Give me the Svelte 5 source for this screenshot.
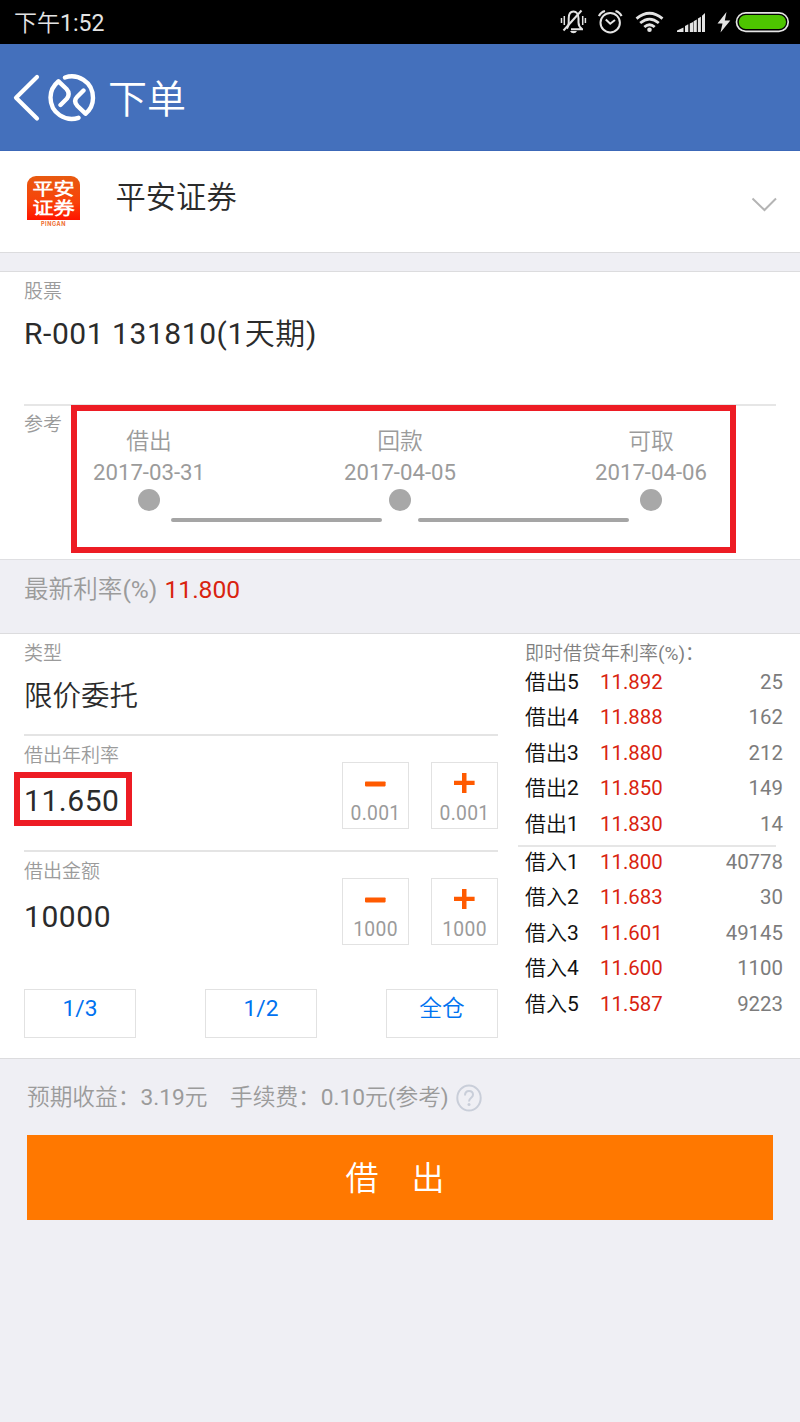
<script>
  const timeline = [
    { label: '借出', date: '2017-03-31' },
    { label: '回款', date: '2017-04-05' },
    { label: '可取', date: '2017-04-06' }
  ];
  const fields = [
    { label: '借出年利率', value: '11.650', step: '0.001', marked: true },
    { label: '借出金额', value: '10000', step: '1000', marked: false }
  ];
  const shares = ['1/3', '1/2', '全仓'];
  const lend = [
    ['借出5', '11.892', '25'],
    ['借出4', '11.888', '162'],
    ['借出3', '11.880', '212'],
    ['借出2', '11.850', '149'],
    ['借出1', '11.830', '14']
  ];
  const borrow = [
    ['借入1', '11.800', '40778'],
    ['借入2', '11.683', '30'],
    ['借入3', '11.601', '49145'],
    ['借入4', '11.600', '1100'],
    ['借入5', '11.587', '9223']
  ];
</script>

{#snippet quote(row)}
  <div class="quote">
    <span class="name">{row[0]}</span>
    <span class="rate">{row[1]}</span>
    <span class="volume">{row[2]}</span>
  </div>
{/snippet}

<div class="screen">
  <div class="status">
    <span class="clock">下午1:52</span>
    <svg class="bell" width="28" height="26" viewBox="560 9 28 26" fill="none" stroke="#e4e4e4" stroke-width="2">
      <path d="M567 28.500q1.700-2 1.700-6v-4c0-4.500 2-7 4.800-7s5 2.500 5 7v4q0 4 3.500 6.500v.3h-11" />
      <path d="M563.500 30.500L581.500 10.500" stroke-width="2" />
      <path d="M570 31h7q-1 2.300-3.500 2.300t-3.500-2.300z" fill="#e4e4e4" stroke="none" />
      <path d="M561.500 18v5M564.300 16v9M582.700 16v9M585.400 18v5" stroke-width="1.500" />
    </svg>
    <svg class="alarm" width="26" height="26" viewBox="597 9 26 26" fill="none" stroke="#e4e4e4">
      <circle cx="610.200" cy="22.700" r="9.700" stroke-width="2" />
      <path d="M605.800 19.500l4.400 4.200 4.800-3.700" stroke-width="2" />
      <path d="M599 16.200q1.500-4 6-5.200M621.500 16.200q-1.500-4-6-5.200" stroke-width="2.200" />
    </svg>
    <svg class="wifi" width="30" height="26" viewBox="635 9 30 26" fill="none" stroke="#e4e4e4" stroke-width="2.800">
      <path d="M636.500 18.700q13-10.800 26 0M640.200 23q9.300-7.800 18.600 0M644.300 27q5.200-4.500 10.400 0" />
      <circle cx="649.500" cy="29.800" r="2.300" fill="#e4e4e4" stroke="none" />
    </svg>
    <svg class="signal" width="29" height="26" viewBox="677 9 29 26" fill="#e4e4e4">
      <path d="M677 32v-1.500l6.500-3V32zM685 32v-6l3.300-1.800V32zM689.800 32v-8.500l3.300-1.600V32zM693.600 32V21.300l3.200-1.700V32zM697.900 32V18.600l3-1.800V32zM702 32V15.700l3-2.700v19z" />
    </svg>
    <svg class="bolt" width="14" height="26" viewBox="717 9 14 26" fill="#e4e4e4">
      <path d="M726.500 12L717.500 23.500h5L720.500 32.500 730.300 20.500h-5.500z" />
    </svg>
    <svg class="battery" width="56" height="26" viewBox="735 9 56 26">
      <rect x="736.500" y="12.800" width="51.700" height="18.500" rx="9.250" fill="none" stroke="#e4e4e4" stroke-width="1.700" />
      <rect x="738.800" y="15" width="47.200" height="14" rx="7" fill="#4dc500" />
    </svg>
  </div>

  <header>
    <svg class="back" width="28" height="50" viewBox="12 73 28 50" fill="none" stroke="#fff" stroke-width="4.200" stroke-linecap="round" stroke-linejoin="round">
      <path d="M37 77L16 97.700l21 20.800" />
    </svg>
    <svg class="brand" width="50" height="50" viewBox="47 73 50 50" fill="none" stroke="#fff" stroke-width="4.400" stroke-linecap="round" stroke-linejoin="round">
      <path d="M65 77.500C77 73.500 93 81 93 98c0 7-3 12-7.500 15.700L77.500 106Q73 101 77 97L83.500 90.500" />
      <path d="M78.500 117.800C66 122 50.500 113.500 50.500 97.500c0-7 3-12 8-16.200L66.500 89Q70.500 93.500 67 98.500L60.500 105" />
    </svg>
    <h1>下单</h1>
  </header>

  <section class="broker">
    <div class="logo">
      <div class="tile"><span>平安</span><span>证券</span></div>
      <small>PINGAN</small>
    </div>
    <span class="broker-name">平安证券</span>
    <svg width="26" height="16" viewBox="0 0 26 16" fill="none" stroke="#b4b4b4" stroke-width="2">
      <path d="M1.500 1.500l12 11.500L25 1.500" />
    </svg>
  </section>

  <section class="stock">
    <div class="label">股票</div>
    <div class="stock-name">R-001 131810(1天期)</div>
    <div class="reference">
      <div class="label">参考</div>
      <div class="timeline">
        {#each timeline as point, i}
          {#if i > 0}<i class="bar"></i>{/if}
          <div class="point">
            <span>{point.label}</span>
            <span>{point.date}</span>
            <i class="dot"></i>
          </div>
        {/each}
        <div class="mark"></div>
      </div>
    </div>
  </section>

  <div class="latest">最新利率(%) <b>11.800</b></div>

  <section class="order">
    <div class="form">
      <div class="kind">
        <div class="label">类型</div>
        <div class="kind-name">限价委托</div>
      </div>
      {#each fields as field}
        <div class="field">
          <div class="entry">
            <div class="label">{field.label}</div>
            <div class="value">
              {field.value}
              {#if field.marked}<div class="mark"></div>{/if}
            </div>
          </div>
          <button class="step">
            <svg width="22" height="22" viewBox="0 0 22 22" fill="#ff5a00"><rect x="0" y="10.500" width="20.600" height="4.900" rx=".8" /></svg>
            <span>{field.step}</span>
          </button>
          <button class="step">
            <svg width="22" height="22" viewBox="0 0 22 22" fill="#ff5a00"><path d="M8 2h4.500v7.700h8.100V14h-8.100v8H8v-8H0V9.700h8z" /></svg>
            <span>{field.step}</span>
          </button>
        </div>
      {/each}
      <div class="shares">
        {#each shares as share}<button>{share}</button>{/each}
      </div>
    </div>

    <div class="book">
      <div class="book-title">即时借贷年利率(%)：</div>
      {#each lend as row}{@render quote(row)}{/each}
      <div class="rule"></div>
      {#each borrow as row}{@render quote(row)}{/each}
    </div>
  </section>

  <footer>
    <div class="estimate">
      <span>预期收益：3.19元　手续费：0.10元(参考)</span>
      <svg width="26" height="28" viewBox="0 0 26 28" fill="none" stroke="#c9ced9" stroke-width="2">
        <ellipse cx="13" cy="14" rx="11.700" ry="12.500" />
        <path d="M9 11.500q0-4.500 4-4.500t4 3.800c0 3-4 3-4 6.700" />
        <circle cx="13" cy="20.500" r="1.500" fill="#c9ced9" stroke="none" />
      </svg>
    </div>
    <button class="submit">借　出</button>
  </footer>
</div>

<style>
  :global(body) {
    margin: 0;
    background: #efeff4;
  }
  .screen {
    width: 800px;
    height: 1422px;
    overflow: hidden;
    background: #efeff4;
    font-family: Roboto, 'Noto Sans CJK SC DemiLight', 'Noto Sans CJK SC', sans-serif;
    font-weight: 400;
    color: #2b2b2b;
  }
  .screen :global(*) {
    box-sizing: border-box;
  }
  svg {
    display: block;
    flex: none;
  }
  button {
    padding: 0;
    border: 0;
    background: none;
    font: inherit;
    letter-spacing: inherit;
  }
  .status {
    display: flex;
    align-items: flex-start;
    height: 44px;
    padding: 9px 9px 0 14px;
    background: #000;
    color: #e4e4e4;
  }
  .clock {
    flex: 1;
    padding-top: 1px;
    font-size: 23px;
    line-height: 28px;
  }
  .alarm { margin-left: 9px; }
  .wifi { margin-left: 12px; }
  .signal { margin-left: 12px; }
  .bolt { margin-left: 11px; }
  .battery { margin-left: 4px; }

  header {
    display: flex;
    align-items: center;
    height: 107px;
    padding: 2px 0 0 12px;
    border-bottom: 1px solid #3c68b8;
    background: #4470bc;
    color: #fff;
  }
  .brand { margin-left: 7px; }
  h1 {
    margin: 3px 0 0 11px;
    font-size: 39px;
    line-height: 50px;
    font-weight: 400;
  }

  .broker {
    display: flex;
    align-items: flex-start;
    height: 102px;
    padding: 25px 23px 0 27px;
    border-bottom: 1px solid #dcdcde;
    background: #fff;
  }
  .broker svg { margin-top: 21px; }
  .logo {
    width: 53px;
    text-align: center;
  }
  .tile {
    display: flex;
    flex-direction: column;
    gap: 1px;
    height: 44px;
    padding-top: 4px;
    border-radius: 9px 9px 0 0;
    background: linear-gradient(#e85a10, #f8420a 60%, #ff1400);
    color: #fff;
    font-size: 17.500px;
    line-height: 18px;
    font-weight: 900;
  }
  .tile span { transform: scaleX(1.2); }
  .logo small {
    display: block;
    color: #ee6a2c;
    font: 700 5.500px/8px Inter, sans-serif;
    letter-spacing: .6px;
  }
  .broker-name {
    flex: 1;
    margin-left: 35.500px;
    font-size: 30.300px;
    line-height: 43px;
  }

  .stock {
    height: 288px;
    margin-top: 18px;
    padding: 10px 24px 0;
    border-top: 1px solid #dcdcde;
    background: #fff;
  }
  .label {
    color: #9b9b9b;
    font-size: 19px;
    line-height: 20px;
  }
  .stock-name {
    height: 102px;
    padding-top: 12px;
    font-size: 30px;
    line-height: 40px;
    letter-spacing: .55px;
  }
  .reference {
    display: flex;
    align-items: flex-start;
    border-top: 2px solid #e6e6e6;
    height: 152px;
  }
  .reference .label { width: 47px; padding-top: 9px; }
  .timeline {
    position: relative;
    display: flex;
    width: 665px;
    height: 148px;
    margin-top: -1px;
    padding: 21px 20px 0;
    color: #9b9b9b;
  }
  .mark {
    position: absolute;
    inset: 0;
    border: 6px solid #ed1c24;
  }
  .point {
    display: flex;
    flex-direction: column;
    align-items: center;
    width: 116px;
    font-size: 22.200px;
    line-height: 31px;
  }
  .point span:first-child { font-size: 22.800px; }
  .dot {
    width: 22px;
    height: 22px;
    margin-top: 1px;
    border-radius: 50%;
    background: #a8a8a8;
  }
  .bar {
    width: 211px;
    height: 4px;
    margin: 92px -40px 0 -36px;
    border-radius: 2px;
    background: #a5a5a5;
  }
  .point + .bar ~ .point + .bar { margin: 92px -36px 0 -40px; }

  .latest {
    height: 74px;
    padding: 14px 24px 0;
    border-top: 1px solid #dfdfe2;
    color: #9b9b9b;
    font-size: 24.600px;
    line-height: 32px;
  }
  .latest b {
    margin-left: 1px;
    color: #d9230f;
    font-weight: 400;
  }

  .order {
    display: flex;
    height: 426px;
    padding: 0 17px 0 24px;
    border-top: 1px solid #dcdcde;
    border-bottom: 1px solid #dcdcde;
    background: #fff;
  }
  .form { width: 474px; }
  .kind {
    height: 100px;
    padding-top: 10px;
  }
  .kind-name {
    padding-top: 12px;
    font-size: 28.500px;
    line-height: 41px;
  }
  .field {
    display: flex;
    align-items: flex-start;
    height: 115.500px;
    border-top: 2px solid #e4e4e4;
  }
  .entry {
    flex: 1;
    padding-top: 10px;
  }
  .value {
    position: relative;
    width: 118px;
    height: 54px;
    margin: 6px 0 0 -10px;
    padding-left: 10px;
    font-size: 30px;
    line-height: 57.500px;
    letter-spacing: .55px;
  }
  .step {
    display: flex;
    flex-direction: column;
    align-items: center;
    width: 67px;
    height: 67px;
    margin: 26px 0 0 22px;
    padding-top: 8px;
    border: 1.500px solid #e2e2e2;
    color: #9b9b9b;
    font-size: 19.300px;
    line-height: 22px;
    letter-spacing: .3px;
  }
  .step span { margin-top: 10px; }
  .shares {
    display: flex;
    justify-content: space-between;
    padding-top: 24px;
  }
  .shares button {
    width: 112px;
    height: 49px;
    padding-bottom: 9px;
    border: 1.500px solid #e2e2e2;
    color: #0072f0;
    font-size: 22.700px;
    line-height: 26px;
  }

  .book {
    flex: 1;
    margin-left: 27px;
  }
  .book-title {
    height: 30.500px;
    padding-top: 10px;
    color: #808080;
    font-size: 19px;
    line-height: 20px;
    white-space: nowrap;
  }
  .quote {
    display: flex;
    height: 35.500px;
    font-size: 20.400px;
    line-height: 35.500px;
  }
  .name {
    width: 75px;
    color: #111;
    font-size: 21px;
  }
  .rate { color: #d9230f; }
  .volume {
    flex: 1;
    color: #7c7c7c;
    text-align: right;
  }
  .rule {
    height: 2px;
    margin: 2.500px 7px -2px -7px;
    background: #e6e6e6;
  }

  footer { padding: 24px 27px 0; }
  .estimate {
    display: flex;
    gap: 7px;
    height: 52px;
    color: #9b9b9b;
    font-size: 22.700px;
    line-height: 30px;
    white-space: pre;
  }
  .estimate svg { margin-top: 1px; }
  .submit {
    display: block;
    width: 746px;
    height: 85px;
    padding: 0 10px 4px 0;
    background: #ff7800;
    color: #fff;
    font-size: 33px;
  }
</style>
